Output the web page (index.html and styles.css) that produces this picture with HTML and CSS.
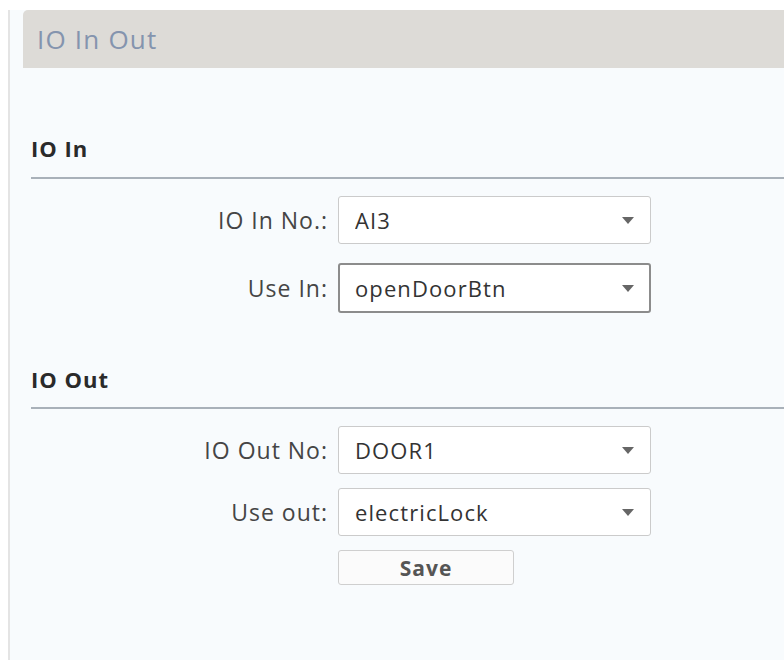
FILE: index.html
```html
<!DOCTYPE html>
<html lang="en">
<head>
    <meta charset="UTF-8">
    <meta name="viewport" content="width=device-width, initial-scale=1.0">
    <title>IO In Out</title>
    <link rel="stylesheet" href="styles.css">
</head>
<body>
    <div class="page">
        <div class="panel">
            <div class="panel-header">IO In Out</div>

            <div class="panel-body">
                <h2 class="section-title first">IO In</h2>

                <div class="form-row">
                    <label for="ioInNo">IO In No.:</label>
                    <div class="select-wrap">
                        <select id="ioInNo">
                            <option>AI3</option>
                            <option>AI1</option>
                            <option>AI2</option>
                        </select>
                    </div>
                </div>

                <div class="form-row">
                    <label for="useIn">Use In:</label>
                    <div class="select-wrap">
                        <select id="useIn" class="active">
                            <option>openDoorBtn</option>
                            <option>doorSensor</option>
                        </select>
                    </div>
                </div>

                <h2 class="section-title">IO Out</h2>

                <div class="form-row tight">
                    <label for="ioOutNo">IO Out No:</label>
                    <div class="select-wrap">
                        <select id="ioOutNo">
                            <option>DOOR1</option>
                            <option>DOOR2</option>
                        </select>
                    </div>
                </div>

                <div class="form-row tight">
                    <label for="useOut">Use out:</label>
                    <div class="select-wrap">
                        <select id="useOut">
                            <option>electricLock</option>
                            <option>alarm</option>
                        </select>
                    </div>
                </div>

                <div class="form-row tight">
                    <span class="spacer"></span>
                    <button class="btn-save" type="button">Save</button>
                </div>
            </div>
        </div>
    </div>
</body>
</html>
```

FILE: styles.css
```css
* {
    box-sizing: border-box;
    margin: 0;
    padding: 0;
}

body {
    font-family: 'Open Sans', 'Noto Sans', sans-serif;
    background: #ffffff;
    color: #444;
}

.page {
    padding: 10px 0 0 8px;
}

.panel {
    height: 650px;
    border-left: 2px solid #e4e4e4;
    background: #f8fbfd;
    padding-left: 13px;
}

.panel-header {
    height: 58px;
    line-height: 58px;
    padding-left: 14px;
    background: #dddbd7;
    border-top-left-radius: 5px;
    font-size: 26px;
    letter-spacing: 1.2px;
    color: #8494ae;
}

.panel-body {
    padding-left: 8px;
}

.section-title {
    margin-top: 51px;
    line-height: 30px;
    padding-bottom: 13px;
    border-bottom: 2px solid #a9b1b9;
    font-size: 22px;
    font-weight: 700;
    letter-spacing: 1px;
    color: #2a2a2a;
}

.section-title.first {
    margin-top: 65px;
    padding-bottom: 14px;
}

.form-row {
    display: flex;
    align-items: center;
    margin-top: 19px;
}

.section-title + .form-row {
    margin-top: 17px;
}

.form-row.tight {
    margin-top: 14px;
}

.section-title + .form-row.tight {
    margin-top: 17px;
}

.form-row label,
.form-row .spacer {
    width: 297px;
    margin-right: 10px;
    text-align: right;
    font-size: 23px;
    letter-spacing: 1px;
    color: #454545;
}

.select-wrap {
    position: relative;
    width: 313px;
}

.select-wrap::after {
    content: '';
    position: absolute;
    right: 17px;
    top: 50%;
    margin-top: -3px;
    border-left: 6px solid transparent;
    border-right: 6px solid transparent;
    border-top: 7px solid #666;
    pointer-events: none;
}

.select-wrap select {
    appearance: none;
    -webkit-appearance: none;
    width: 100%;
    height: 48px;
    padding-left: 16px;
    border: 1px solid #cbcbcb;
    border-radius: 3px;
    background: #ffffff;
    font-family: inherit;
    font-size: 22px;
    letter-spacing: 1.1px;
    color: #333;
    outline: none;
}

.select-wrap select.active {
    height: 50px;
    border: 2px solid #8c8c8c;
    padding-left: 15px;
}

.btn-save {
    width: 176px;
    height: 35px;
    border: 1px solid #cfcfcf;
    border-radius: 3px;
    background: #fbfbfb;
    font-family: inherit;
    font-size: 21px;
    font-weight: 700;
    letter-spacing: 1px;
    color: #555;
    cursor: pointer;
}
```
